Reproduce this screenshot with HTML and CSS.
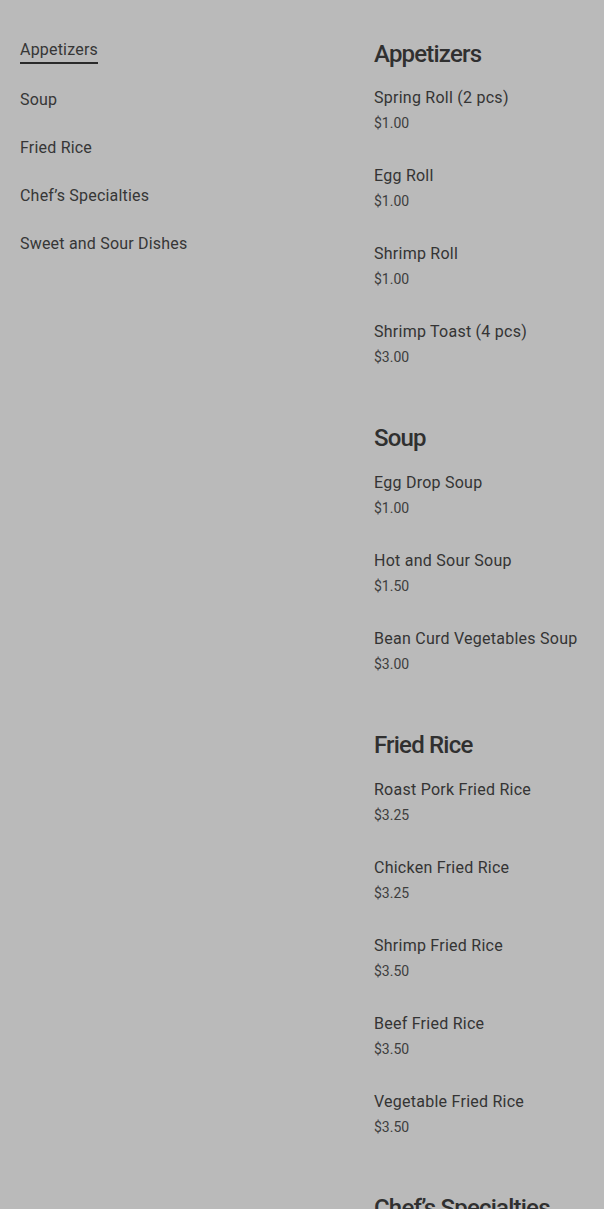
FILE: index.html
```html
<!DOCTYPE html>
<html lang="en">
<head>
<meta charset="utf-8">
<title>Menu</title>
<link rel="stylesheet" href="styles.css">
</head>
<body>
<div class="page">
  <nav class="nav">
    <a class="nav-link active" href="#appetizers">Appetizers</a>
    <a class="nav-link" href="#soup">Soup</a>
    <a class="nav-link" href="#fried-rice">Fried Rice</a>
    <a class="nav-link" href="#chefs">Chef’s Specialties</a>
    <a class="nav-link" href="#sweet-sour">Sweet and Sour Dishes</a>
  </nav>
  <main class="menu">
    <section class="section" id="appetizers">
      <h2 class="section-title">Appetizers</h2>
      <div class="item"><div class="item-name">Spring Roll (2 pcs)</div><div class="item-price">$1.00</div></div>
      <div class="item"><div class="item-name">Egg Roll</div><div class="item-price">$1.00</div></div>
      <div class="item"><div class="item-name">Shrimp Roll</div><div class="item-price">$1.00</div></div>
      <div class="item"><div class="item-name">Shrimp Toast (4 pcs)</div><div class="item-price">$3.00</div></div>
    </section>
    <section class="section" id="soup">
      <h2 class="section-title">Soup</h2>
      <div class="item"><div class="item-name">Egg Drop Soup</div><div class="item-price">$1.00</div></div>
      <div class="item"><div class="item-name">Hot and Sour Soup</div><div class="item-price">$1.50</div></div>
      <div class="item"><div class="item-name">Bean Curd Vegetables Soup</div><div class="item-price">$3.00</div></div>
    </section>
    <section class="section" id="fried-rice">
      <h2 class="section-title">Fried Rice</h2>
      <div class="item"><div class="item-name">Roast Pork Fried Rice</div><div class="item-price">$3.25</div></div>
      <div class="item"><div class="item-name">Chicken Fried Rice</div><div class="item-price">$3.25</div></div>
      <div class="item"><div class="item-name">Shrimp Fried Rice</div><div class="item-price">$3.50</div></div>
      <div class="item"><div class="item-name">Beef Fried Rice</div><div class="item-price">$3.50</div></div>
      <div class="item"><div class="item-name">Vegetable Fried Rice</div><div class="item-price">$3.50</div></div>
    </section>
    <section class="section" id="chefs">
      <h2 class="section-title">Chef’s Specialties</h2>
    </section>
  </main>
</div>
</body>
</html>
```
FILE: styles.css
```css
html, body {
  margin: 0;
  padding: 0;
  background: #bababa;
}
body {
  font-family: Roboto, "Liberation Sans", sans-serif;
  color: #353535;
}
.page {
  display: grid;
  grid-template-columns: 354px 1fr;
  padding: 37.5px 20px 0 20px;
}
.nav {
  display: flex;
  flex-direction: column;
  align-items: flex-start;
  gap: 24px;
  padding-top: 0.5px;
}
.nav-link {
  font-size: 16px;
  line-height: 24px;
  letter-spacing: 0.2px;
  color: #363636;
  text-decoration: none;
}
.nav-link.active {
  border-bottom: 2px solid #2a2a2a;
}
.menu {
  display: flex;
  flex-direction: column;
  gap: 24.67px;
  white-space: nowrap;
}
.section {
  display: flex;
  flex-direction: column;
}
.section-title {
  margin: 0 0 16.33px 0;
  font-size: 24px;
  line-height: 32px;
  font-weight: 500;
  letter-spacing: -0.8px;
  color: #303030;
}
.item {
  margin-bottom: 31px;
}
.item-name {
  font-size: 16px;
  line-height: 24px;
  letter-spacing: 0.25px;
  color: #343434;
}
.item-price {
  margin-top: 3px;
  font-size: 14px;
  line-height: 20px;
  color: #3e3e3e;
}
```
